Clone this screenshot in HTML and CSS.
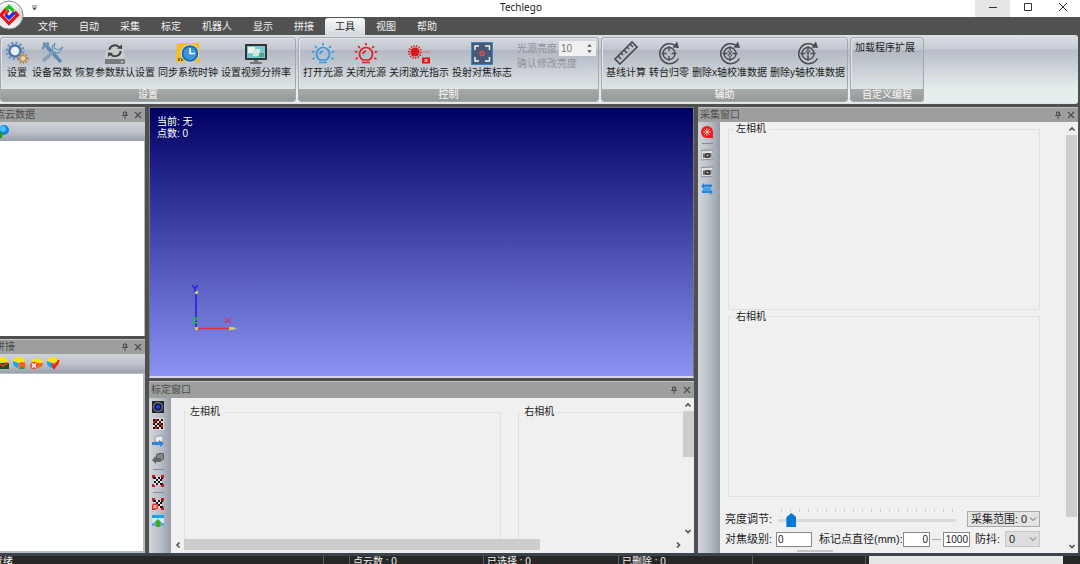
FILE: index.html
```html
<!DOCTYPE html>
<html lang="zh-CN">
<head>
<meta charset="utf-8">
<title>Techlego</title>
<link rel="stylesheet" href="styles.css">
</head>
<body>
<svg class="defs" aria-hidden="true">
  <symbol id="pin" viewBox="0 0 8 8"><path d="M2.500 1h3v3.500h-3zM1 4.500h6M4 5v3M5 1v3" fill="none" stroke="currentColor"/></symbol>
  <symbol id="cross" viewBox="0 0 8 8"><path d="M1 1l6 6M7 1l-6 6" fill="none" stroke="currentColor" stroke-width="1.2"/></symbol>
  <symbol id="up" viewBox="0 0 8 8"><path d="M1.500 5.500L4 3l2.500 2.500" fill="none" stroke="currentColor" stroke-width="1.6"/></symbol>
  <symbol id="down" viewBox="0 0 8 8"><path d="M1.500 3L4 5.500 6.500 3" fill="none" stroke="currentColor" stroke-width="1.6"/></symbol>
  <symbol id="left" viewBox="0 0 8 8"><path d="M5.500 1.500L3 4l2.500 2.500" fill="none" stroke="currentColor" stroke-width="1.6"/></symbol>
  <symbol id="right" viewBox="0 0 8 8"><path d="M3 1.500L5.500 4 3 6.500" fill="none" stroke="currentColor" stroke-width="1.6"/></symbol>
  <symbol id="chev" viewBox="0 0 8 8"><path d="M1 2.500l3 3 3-3" fill="none" stroke="currentColor"/></symbol>
  <symbol id="bulb" viewBox="0 0 24 24">
    <path d="M9 19C6.500 17.500 5.500 15.500 5.500 13a6.500 6.500 0 0113 0c0 2.500-1 4.500-3.500 6zM8 21.500h8M9 13a3.500 3.500 0 013-3M12 2v2.500M4 5l1.800 1.800M20 5l-1.800 1.800M.8 10.500l2.700.8M23.200 10.500l-2.700.8M1.500 18l2.300-1M22.500 18l-2.300-1" fill="none" stroke="currentColor" stroke-width="1.700"/>
  </symbol>
  <symbol id="turn" viewBox="0 0 24 24">
    <path d="M18.500 4.500A10 10 0 1021.500 17.500" fill="none" stroke="currentColor" stroke-width="1.500"/>
    <path d="M15.500 6.500l6.500.5L20 .5z" fill="currentColor"/>
    <circle cx="12" cy="12.500" r="6" fill="none" stroke="currentColor" stroke-width="1.400"/>
    <path d="M12 5v5M12 15v5M4.500 12.500h5M14.500 12.500h5" stroke="currentColor" stroke-width="1.300"/>
  </symbol>
  <symbol id="pie" viewBox="0 0 13 13">
    <path d="M6 6L0 4a6 6 0 005 7z" fill="#18a4f5"/><path d="M6 6L0 4C2-1 10-1 12 5z" fill="#ffe500"/><path d="M6 6l6-1c0 3-3 6-6 6z" fill="#f4641c"/>
  </symbol>
  <symbol id="board" viewBox="0 0 12 12">
    <rect width="12" height="12" fill="#e9d5d0"/>
    <path d="M1 1h2v2H1zM5 1h2v2H5zM9 1h2v2H9zM3 3h2v2H3zM7 3h2v2H7zM1 5h2v2H1zM5 5h2v2H5zM9 5h2v2H9zM3 7h2v2H3zM7 7h2v2H7zM1 9h2v2H1zM5 9h2v2H5zM9 9h2v2H9z" fill="#151010"/>
  </symbol>
  <symbol id="marks" viewBox="0 0 12 12">
    <path d="M2 2h8v8H2z" fill="#e8e8e8"/>
    <path d="M1 2h3v2H1zM6 2h2v2H6zM4 4h2v2H4zM8 4h2v2H8zM2 6h2v2H2zM6 6h2v2H6zM4 8h2v2H4zM8 8h3v2H8zM9 2h2v2H9z" fill="#111"/>
    <path d="M0 0h3v2H2v1H0zM12 0H9v2h1v1h2zM0 12h3v-2H2V9H0zM12 12H9v-2h1V9h2z" fill="#d3161c"/>
  </symbol>
  <symbol id="cam" viewBox="0 0 12 12">
    <path d="M0 1.500L12 1v9L0 11z" fill="#dfe0de" stroke="#777" stroke-width=".8"/><path d="M2 4.500L10.500 4v4.500L2 9z" fill="#6b6b6b"/><circle cx="6.500" cy="6.500" r="2.500" fill="#333"/><circle cx="6.500" cy="6.500" r="1.100" fill="#bbb"/>
  </symbol>
</svg>

<div class="app">
  <header class="titlebar">
    <svg class="qat" viewBox="0 0 6 6"><path d="M0 .5h6" stroke="#555"/><path d="M0 2.500h6L3 6z" fill="#555"/></svg>
    <h1 class="title">Techlego</h1>
    <div class="winctl">
      <button class="wbtn hot" aria-label="最小化"><svg viewBox="0 0 10 10"><path d="M1 5.500h8" stroke="#333"/></svg></button>
      <button class="wbtn" aria-label="最大化"><svg viewBox="0 0 10 10"><path d="M1.500 1.500h7v7h-7z" fill="none" stroke="#333"/></svg></button>
      <button class="wbtn" aria-label="关闭"><svg viewBox="0 0 10 10"><path d="M1 1l8 8M9 1l-8 8" stroke="#333"/></svg></button>
    </div>
  </header>
  <button class="orb" aria-label="应用菜单">
    <svg viewBox="0 0 30 30">
      <defs><linearGradient id="og" x2="0" y2="1"><stop offset="0" stop-color="#fff"/><stop offset=".5" stop-color="#d8d8d8"/><stop offset="1" stop-color="#fafafa"/></linearGradient></defs>
      <circle cx="15" cy="15" r="14" fill="url(#og)" stroke="#8b8b8b"/>
      <path d="M15 6l9 9-9 9-9-9z" fill="#f4f4f4"/>
      <g fill="none" stroke-width="3.200">
        <path d="M12.500 8.500L7 15l8 8.500 8.500-8.500-3-3.500" stroke="#e51414"/>
        <path d="M12 9.500L15 6.500l4.500 4.500" stroke="#17c41c"/>
        <path d="M11.500 14.500l3.500 3.500 5.500-5.500" stroke="#2030e0"/>
        <path d="M11 14.500l4-4" stroke="#e51414" stroke-width="2"/>
      </g>
    </svg>
  </button>

  <nav class="tabs">
    <button class="tab">文件</button><button class="tab">自动</button><button class="tab">采集</button><button class="tab">标定</button><button class="tab">机器人</button><button class="tab">显示</button><button class="tab">拼接</button><button class="tab active">工具</button><button class="tab">视图</button><button class="tab">帮助</button>
  </nav>

  <section class="ribbon">
    <div class="group first">
      <div class="tools">
        <button class="tool"><svg viewBox="0 0 24 24">
          <circle cx="10" cy="10" r="8" fill="none" stroke="#6f95c4" stroke-width="3" stroke-dasharray="2.200 2"/><circle cx="10" cy="10" r="5.500" fill="none" stroke="#4a76ae" stroke-width="2.500"/><circle cx="10" cy="10" r="4.200" fill="#e8f0f8"/>
          <circle cx="18" cy="17.500" r="4.500" fill="none" stroke="#b8905a" stroke-width="2.500" stroke-dasharray="1.600 1.300"/><circle cx="18" cy="17.500" r="3" fill="#e8d2ae" stroke="#ab8550"/></svg>设置</button>
        <button class="tool"><svg viewBox="0 0 24 24">
          <path d="M3 3l4 1 1 3 13 14" fill="none" stroke="#5d88ba" stroke-width="3.500"/><path d="M3 20L15 9" stroke="#8ba0b4" stroke-width="3.500"/><path d="M23 6l-5 3-4-2 1-5-3 3 1 6 6 1z" fill="#b4c6d6" stroke="#6487aa"/><path d="M1 7l6-6 3 1-7 7z" fill="#7394b6"/></svg>设备常数</button>
        <button class="tool"><svg viewBox="0 0 24 24">
          <path d="M4 1h16l2 17H2z" fill="#c9cccd"/><path d="M2 18h20v5H2z" fill="#767b7e"/><path d="M6.500 9a5.500 5 0 0110-2.500M17.500 10a5.500 5 0 01-10 3" fill="none" stroke="#3e4346" stroke-width="2"/><path d="M14 7.500l5 .5V3.500zM10 12l-5-.5V16z" fill="#3e4346"/><circle cx="19" cy="21" r="1" fill="#c5d8b5"/></svg>恢复参数默认设置</button>
        <button class="tool"><svg viewBox="0 0 24 24">
          <path d="M1 2h22l1 19H0z" fill="#f6bd20"/><path d="M2 20v-3h2v3zM5 20v-3h2v3z" fill="#8b620b"/><circle cx="14" cy="12.500" r="8.800" fill="#1d66ad" stroke="#d8e6f0"/><circle cx="14" cy="12.500" r="6.500" fill="#3b96dc"/><path d="M14 7v5.500h5" fill="none" stroke="#fff" stroke-width="1.500"/></svg>同步系统时钟</button>
        <button class="tool"><svg viewBox="0 0 24 24">
          <rect x="1" y="3" width="22" height="16" rx="1" fill="#313536"/><rect x="3" y="5" width="18" height="12" fill="#79c7d2"/><path d="M4 6h7v6H4z" fill="#e7f5ee"/><path d="M9 8h7v7H9z" fill="#d3e9dd"/><path d="M15 12h5v4h-5z" fill="#4bad83"/><path d="M10 19h4v2h4v2H6v-2h4z" fill="#73797a"/></svg>设置视频分辨率</button>
      </div>
      <h2 class="caption">设置</h2>
    </div>
    <div class="group">
      <div class="tools">
        <button class="tool"><svg class="blue"><use href="#bulb"/></svg>打开光源</button>
        <button class="tool"><svg class="red"><use href="#bulb"/></svg>关闭光源</button>
        <button class="tool"><svg viewBox="0 0 24 24"><circle cx="8" cy="11" r="4.500" fill="#dc1717"/><circle cx="8" cy="11" r="6" fill="none" stroke="#dc1717" stroke-width="2" stroke-dasharray="1.200 1.400"/><path d="M14 11h9" stroke="#e57070"/><path d="M15 16.500h8v6h-8z" fill="#dc1717"/><path d="M17.500 18l3 3M20.500 18l-3 3" stroke="#fff"/></svg>关闭激光指示</button>
        <button class="tool"><svg viewBox="0 0 24 24"><path d="M1.500 1.500h21v22h-21z" fill="#475976" stroke="#3a86be"/><path d="M5 9V5h4M15 5h4.500v4M19.500 16v4H15M9 20H5v-4" fill="none" stroke="#f5f5f5" stroke-width="1.500"/><circle cx="12" cy="12.500" r="2" fill="none" stroke="#f04a43" stroke-width="1.300"/></svg>投射对焦标志</button>
        <div class="light">
          <div class="bright"><label for="lux">光源亮度</label><span class="spin"><input id="lux" type="text" value="10" disabled><svg viewBox="0 0 6 10"><path d="M1 3.500h4L3 1zM1 6.500h4L3 9z" fill="#555"/></svg></span></div>
          <button class="apply" disabled>确认修改亮度</button>
        </div>
      </div>
      <h2 class="caption">控制</h2>
    </div>
    <div class="group">
      <div class="tools">
        <button class="tool"><svg viewBox="0 0 24 24"><path d="M1 18L18 1l5 5L6 23zM4 15l3 3M7 12l2 2M10 9l3 3M13 6l2 2M16 3l3 3" fill="none" stroke="#494b4d" stroke-width="1.700"/></svg>基线计算</button>
        <button class="tool"><svg class="gray"><use href="#turn"/></svg>转台归零</button>
        <button class="tool"><svg class="gray" viewBox="0 0 24 24"><use href="#turn"/><path d="M10 10l4 5M14 10l-4 5" stroke="currentColor" stroke-width="1.200"/></svg>删除x轴校准数据</button>
        <button class="tool"><svg class="gray" viewBox="0 0 24 24"><use href="#turn"/><path d="M10 9.500l2 3 2-3M12 12v4" fill="none" stroke="currentColor" stroke-width="1.200"/></svg>删除y轴校准数据</button>
      </div>
      <h2 class="caption">辅助</h2>
    </div>
    <div class="group last">
      <div class="tools"><button class="tool">加载程序扩展</button></div>
      <h2 class="caption">自定义编程</h2>
    </div>
  </section>

  <main class="work">
    <div class="side">
      <section class="dock">
        <header class="dockhead"><h2 class="cut">点云数据</h2><button aria-label="固定"><svg><use href="#pin"/></svg></button><button aria-label="关闭"><svg><use href="#cross"/></svg></button></header>
        <div class="hbar"><button aria-label="点云"><svg viewBox="0 0 13 13"><circle cx="8" cy="5" r="5" fill="#1681e8"/><circle cx="7" cy="4" r="3" fill="#3fc0fa"/><path d="M2 8l5-1-1 6H2z" fill="#25960f"/></svg></button></div>
        <div class="list"></div>
      </section>
      <section class="dock">
        <header class="dockhead"><h2 class="cut">拼接</h2><button aria-label="固定"><svg><use href="#pin"/></svg></button><button aria-label="关闭"><svg><use href="#cross"/></svg></button></header>
        <div class="hbar">
          <button aria-label="拼接图"><svg viewBox="0 0 13 13"><use href="#pie"/><path d="M0 6h13v6H0z" fill="#14532a"/><path d="M1 9l3-2 3 2 5-3" fill="none" stroke="#e33b19" stroke-width="1.500"/></svg></button>
          <button aria-label="添加"><svg viewBox="0 0 13 13"><use href="#pie"/><circle cx="9" cy="8.500" r="3.500" fill="#f4641c"/><path d="M6 12h6l-3-3z" fill="#18a03d"/></svg></button>
          <button aria-label="删除"><svg viewBox="0 0 13 13"><path d="M1 6C2 0 12 1 13 6z" fill="#ffe500"/><path d="M5 6h8c0 4-4 5-8 5z" fill="#f4641c"/><circle cx="4" cy="8.500" r="3.800" fill="#e75338"/><path d="M2 6.500l4 4M6 6.500l-4 4" stroke="#fff" stroke-width="1.500"/></svg></button>
          <button aria-label="确认"><svg viewBox="0 0 13 13"><use href="#pie"/><path d="M5 7l2 4 5-8" fill="none" stroke="#e2231a" stroke-width="2"/></svg></button>
        </div>
        <div class="list framed"></div>
      </section>
    </div>

    <div class="center">
      <section class="view">
        <p>当前: 无<br>点数: 0</p>
        <svg class="axes" viewBox="0 0 48 48">
          <path d="M6 43V8" stroke="#3030d8" stroke-width="2"/><path d="M7 43.500h33" stroke="#e22c38" stroke-width="1.500"/>
          <path d="M5 6h3v3H5zM5 42h3v3H5zM39 42h4l4 1.500-4 1.500h-4z" fill="#cccb72"/>
          <path d="M2 0l3 3.500L8 0M5 3v4" fill="none" stroke="#2525df" stroke-width="1.500"/>
          <path d="M2 33h6l-6 5h6" fill="none" stroke="#22b650" stroke-width="1.300"/><path d="M35 33l6 5M41 33l-6 5" stroke="#c9386d" stroke-width="1.300"/>
        </svg>
      </section>
      <section class="dock calib">
        <header class="dockhead"><h2>标定窗口</h2><button aria-label="固定"><svg><use href="#pin"/></svg></button><button aria-label="关闭"><svg><use href="#cross"/></svg></button></header>
        <div class="split">
          <div class="vbar">
            <button aria-label="相机"><svg viewBox="0 0 12 12"><rect width="12" height="12" fill="#26282b"/><circle cx="6" cy="6" r="5" fill="#777b80"/><circle cx="6" cy="6" r="3.800" fill="#0b1550"/><circle cx="6" cy="6" r="2" fill="#263de0"/></svg></button>
            <button aria-label="标定板"><svg viewBox="0 0 12 12"><use href="#board"/><path d="M3 1h2v2H3zM7 5h2v2H7zM3 9h2v2H3zM9 7h2v2H9zM1 3h2v2H1z" fill="#cf3028"/></svg></button>
            <button aria-label="导出"><svg viewBox="0 0 12 12"><path d="M3 2l2-1h6v6H3z" fill="#e9edf0" stroke="#8a969f"/><path d="M0 7h7V5l5 3.500L8 12v-2H0z" fill="#2a86dc"/></svg></button>
            <button aria-label="导入"><svg viewBox="0 0 12 12"><path d="M4.500 2.500l2-1h5v6l-2 1h-5z" fill="#858585" stroke="#5c5c5c"/><path d="M0 8l4-4v2h5v4H4v2z" fill="#636363"/></svg></button>
            <hr>
            <button aria-label="标记"><svg><use href="#marks"/></svg></button>
            <hr>
            <button aria-label="删除标记"><svg viewBox="0 0 12 12"><use href="#marks"/><circle cx="3" cy="8.500" r="3.300" fill="#e93a2b"/><path d="M1.500 7l3 3M4.500 7l-3 3" stroke="#fff"/></svg></button>
            <button aria-label="上传"><svg viewBox="0 0 12 12"><rect width="12" height="11" fill="#cfe9fa"/><path d="M0 0h12v3H0z" fill="#19a5ed"/><path d="M0 8h12v3H0z" fill="#5cabe0"/><path d="M6 4l4 4H8v4H4V8H2z" fill="#43a823"/></svg></button>
          </div>
          <div class="scroller">
            <div class="pair">
              <fieldset><legend>左相机</legend></fieldset>
              <fieldset class="open"><legend>右相机</legend></fieldset>
            </div>
            <div class="sv"><svg><use href="#up"/></svg><i></i><svg class="end"><use href="#down"/></svg></div>
            <div class="sh"><svg><use href="#left"/></svg><i></i><svg class="end"><use href="#right"/></svg></div>
          </div>
        </div>
      </section>
    </div>

    <section class="dock">
      <header class="dockhead"><h2>采集窗口</h2><button aria-label="固定"><svg><use href="#pin"/></svg></button><button aria-label="关闭"><svg><use href="#cross"/></svg></button></header>
      <div class="split">
        <div class="vbar">
          <button aria-label="采集"><svg viewBox="0 0 12 12"><path d="M6 0a6 6 0 016 6v6H6A6 6 0 016 0z" fill="#e9191c"/><path d="M6 2v8M2 6h8M3 3l6 6M9 3l-6 6" stroke="#fbd0cd" stroke-width=".8"/></svg></button>
          <hr>
          <button aria-label="左相机拍摄"><svg><use href="#cam"/></svg></button>
          <button aria-label="右相机拍摄"><svg><use href="#cam"/></svg></button>
          <button aria-label="交换"><svg viewBox="0 0 12 12"><path d="M0 3l3-3v1.500h8V4H3v2zM12 9L9 6v1.500H1V10h8v2z" fill="#2386de"/><path d="M2 4.500h8v3H2z" fill="#3b9dee"/></svg></button>
        </div>
        <div class="scroller tall">
          <form class="capture">
            <fieldset><legend>左相机</legend></fieldset>
            <fieldset><legend>右相机</legend></fieldset>
            <div class="row">
              <label for="lum">亮度调节:</label>
              <div class="slider"><span class="ticks"></span><input id="lum" type="range" min="0" max="100" value="5"></div>
              <span class="pick"><select aria-label="采集范围"><option>采集范围: 0</option></select><svg><use href="#chev"/></svg></span>
            </div>
            <div class="row">
              <label for="foc">对焦级别:</label><input class="num" id="foc" type="text" value="0">
              <label class="dia" for="dmin">标记点直径(mm):</label><input class="num small" id="dmin" type="text" value="0"><span class="dash"></span><input class="num small" type="text" value="1000" aria-label="最大直径">
              <label class="shake" for="shk">防抖:</label>
              <span class="pick fill"><select id="shk"><option>0</option></select><svg><use href="#chev"/></svg></span>
            </div>
            <span class="stub"></span>
          </form>
          <div class="sv"><svg><use href="#up"/></svg><i></i><svg class="end"><use href="#down"/></svg></div>
        </div>
      </div>
    </section>
  </main>

  <footer class="status">
    <span class="cut">就绪</span><span></span><span>点云数 : 0</span><span>已选择 : 0</span><span>已删除 : 0</span><span></span><span><b class="bar"></b></span>
  </footer>
</div>
</body>
</html>
```
FILE: styles.css
```css
* { box-sizing: border-box; }
body {
  margin: 0;
  font: 10px/14px "Liberation Sans", "Noto Sans CJK SC", sans-serif;
  color: #1c1c1c;
}
button, input, select { font: inherit; color: inherit; margin: 0; padding: 0; }
button { border: 0; background: none; }
h1, h2, p { margin: 0; font-size: 10px; font-weight: 400; }
svg { display: block; }
.defs { position: absolute; width: 0; height: 0; }

.app {
  position: relative;
  display: flex;
  flex-direction: column;
  height: 100vh;
  overflow: hidden;
  background: #505050;
}

/* title bar */
.titlebar {
  display: grid;
  grid-template-columns: 1fr auto 1fr;
  height: 17px;
  background: #fff;
}
.qat { width: 5px; height: 6px; margin: 5px 0 0 32px; }
.title { font-family: "Noto Sans", sans-serif; line-height: 15px; margin-right: 38px; }
.winctl { display: flex; justify-content: flex-end; }
.wbtn { width: 35px; display: grid; place-items: center; padding-bottom: 3px; }
.wbtn svg { width: 10px; height: 10px; }
.hot { background: #e5e5e5; }
.orb { position: absolute; left: -6px; top: 0; z-index: 2; }
.orb svg { width: 30px; height: 30px; }

/* ribbon */
.tabs {
  display: flex;
  gap: 1px;
  height: 18px;
  padding: 1px 0 0 28px;
  background: #515151;
}
.tab { padding: 0 10px; color: #f2f2f2; border-radius: 3px 3px 0 0; line-height: 18px; }
.active { background: linear-gradient(#f8fafa, #d5d9df); color: #1c1c1c; }
.ribbon {
  display: flex;
  gap: 2px;
  height: 69px;
  margin-right: 2px;
  padding: 2px 0 1px;
  border-bottom: 1px solid #dfe5e6;
  border-radius: 0 3px 3px 0;
  background: linear-gradient(#dde1e6, #c8ccd5 20%, #b8bdc8 22%, #e6eded 80%);
}
.group {
  display: flex;
  flex-direction: column;
  border: 1px solid #a4a8ae;
  border-radius: 3px;
  overflow: hidden;
  background: linear-gradient(#d4d8de, #c3c7d0 18%, #b3b8c4 20%, #dfe6e6 82%);
  box-shadow: inset 1px 1px #e3e6ea;
}
.last { min-width: 74px; }
.tools { flex: 1; display: flex; gap: 3px; padding: 3px 2px 0 4px; align-items: flex-start; }
.first .tools { padding-right: 4px; }
.tool {
  display: flex;
  flex-direction: column;
  align-items: center;
  gap: 1px;
  min-width: 24px;
  white-space: nowrap;
}
.tool svg { width: 24px; height: 24px; }
.caption {
  height: 12px;
  line-height: 12px;
  text-align: center;
  color: #fafafa;
  background: linear-gradient(#a9abab, #979999);
}
.blue { color: #2e9be0; }
.red { color: #dd1c1c; }
.gray { color: #4b4d4f; }
.light { color: #8f9297; padding-left: 2px; }
.bright { display: flex; gap: 2px; align-items: center; }
.spin { display: grid; grid-template-columns: 1fr 10px; width: 37px; height: 15px; align-items: center; background: #f0f0f0; }
.spin input { width: 100%; border: 0; padding-left: 2px; background: none; color: #77797c; }
.spin svg { width: 7px; height: 11px; }
.apply { color: #8f9297; margin-top: 1px; }

/* docked panels */
.work {
  flex: 1;
  min-height: 0;
  display: grid;
  grid-template-columns: 145px minmax(0, 1fr) 380px;
  gap: 4px;
  padding: 3px 2px 0 0;
}
.side, .center { display: grid; gap: 3px; min-height: 0; }
.side { grid-template-rows: minmax(0, 1fr) 214px; }
.center { grid-template-rows: minmax(0, 1fr) 172px; }
.dock { display: flex; flex-direction: column; min-width: 0; min-height: 0; background: #c5c8cc; }
.dockhead {
  display: flex;
  align-items: center;
  gap: 5px;
  height: 15px;
  padding: 0 3px 0 2px;
  border-top: 1px solid #c0c2c1;
  background: #9d9f9e;
  color: #4c4c4c;
}
.calib .dockhead { height: 17px; }
.dockhead h2 { flex: 1; line-height: 14px; }
.dockhead svg { width: 8px; height: 8px; }
.dockhead h2.cut { text-indent: -7px; white-space: nowrap; }
.hbar {
  display: flex;
  gap: 4px;
  height: 19px;
  padding-top: 3px;
  background: linear-gradient(#ced2d8, #bdc2cb 50%, #9ba1ac);
}
.hbar svg { width: 13px; height: 13px; }
.hbar button { display: flex; align-items: flex-start; }
.hbar button:first-child { margin-left: -4px; }
.list { flex: 1; background: #fff; border-right: 1px solid #b5b9be; }
.framed { border: solid #b9bec3; border-width: 1px 2px 2px 0; }

.view {
  position: relative;
  padding: 8px 7px;
  color: #fff;
  border: 1px solid #777;
  border-bottom: 2px solid #d8d8e8;
  background: linear-gradient(#000062, #8b93f3);
}
.view p { line-height: 12px; }
.axes { position: absolute; left: 40px; bottom: 43px; width: 48px; height: 48px; }

.split { flex: 1; min-height: 0; display: grid; grid-template-columns: 22px minmax(0, 1fr); }
.vbar {
  display: flex;
  flex-direction: column;
  align-items: center;
  gap: 5px;
  padding: 4px 4px 0 0;
  background: linear-gradient(90deg, #d0d4da, #bbc0c8 50%, #969da8);
}
.calib .vbar { padding-top: 3px; }
.vbar svg { width: 12px; height: 12px; }
.vbar hr { width: 11px; margin: 0; border: 0; border-top: 1px solid #888d94; }

.scroller {
  display: grid;
  grid-template: minmax(0, 1fr) 13px / minmax(0, 1fr) 12px;
  min-height: 0;
  padding-bottom: 2px;
  background: #f0f0f0;
}
.tall { grid-template: minmax(0, 1fr) / minmax(0, 1fr) 13px; padding: 0; }
.sv, .sh { display: flex; align-items: center; gap: 2px; color: #505050; }
.sv { flex-direction: column; padding: 3px 0; }
.sh { padding: 0 12px 0 3px; grid-column: 1 / 3; }
.sv svg, .sh svg { width: 8px; height: 8px; flex: none; }
.sv i { width: 11px; height: 46px; background: #cdcdcd; }
.sh i { width: 70%; height: 11px; background: #cdcdcd; }
.tall .sv i { height: 382px; }
.sv .end { margin-top: auto; }
.sh .end { margin-left: auto; }

fieldset { min-width: 0; margin: 0; padding: 0; border: 1px solid #e0e0e0; }
legend { margin-left: 2px; padding: 0 3px; line-height: 14px; }
.pair { display: grid; grid-template-columns: 316fr 163fr; gap: 17px; padding: 7px 0 0 13px; }
.pair fieldset { border-bottom: 0; }
.pair .open { border-right: 0; }

/* capture form */
.capture {
  display: flex;
  flex-direction: column;
  min-height: 0;
  padding-left: 5px;
  overflow: hidden;
  font-size: 11px;
}
.capture fieldset { flex: 1; margin: 0 25px 0 3px; }
.capture fieldset legend { margin-left: 4px; font-size: 10px; }
.row { display: flex; align-items: center; margin-right: 25px; height: 20px; white-space: nowrap; }
.row:nth-of-type(1) { margin-top: 12px; }
.row label { flex: none; width: 51px; }
.row .dia { width: 84px; margin-left: 7px; }
.row .shake { width: 30px; margin-left: 5px; }
.slider { flex: 1; display: flex; flex-direction: column; height: 20px; margin: 0 11px 0 2px; }
.ticks { height: 3px; margin: 0 3px; background: repeating-linear-gradient(90deg, #cdcdcd 0 1px, transparent 1px 9px); }
.slider input { width: 100%; height: 16px; appearance: none; background: linear-gradient(#dadada, #dadada) center / 100% 3px no-repeat; }
.slider input::-webkit-slider-thumb {
  appearance: none;
  width: 10px;
  height: 14px;
  background: #0078d7;
  clip-path: polygon(50% 0, 100% 30%, 100% 100%, 0 100%, 0 30%);
}
.pick { display: grid; width: 73px; height: 16px; align-items: center; background: #e3e3e3; border: 1px solid #a9a9a9; }
.pick select { grid-area: 1 / 1; width: 100%; padding-left: 3px; border: 0; appearance: none; background: none; }
.pick svg { grid-area: 1 / 1; justify-self: end; width: 8px; height: 8px; margin-right: 2px; color: #666; pointer-events: none; }
.pick.fill { flex: 1; width: auto; background: #dedede; border-color: #c6c6c6; }
.num { width: 36px; height: 15px; padding: 0 1px; border: 1px solid #888; background: #fff; font-size: 10px; }
.num.small { width: 27px; text-align: right; }
.dash { width: 9px; margin: 0 2px; border-top: 1px solid #aaa; }
.stub { width: 36px; height: 2px; margin: 1px 0 1px 72px; background: #c4c4c4; flex: none; }

/* status bar */
.status {
  display: grid;
  grid-template-columns: 324fr 26fr 134fr 135fr 134fr 113fr 214fr;
  height: 11px;
  overflow: hidden;
  border-top: 3px solid #3c434d;
  background: #272727;
  color: #efefef;
}
.status span { padding-left: 3px; line-height: 12px; border-right: 1px solid #5a5d61; white-space: nowrap; }
.status span:last-child { border: 0; }
.status .cut { text-indent: -10px; }
.bar { display: block; height: 8px; margin-right: 17px; background: #e6e6e6; }
```
